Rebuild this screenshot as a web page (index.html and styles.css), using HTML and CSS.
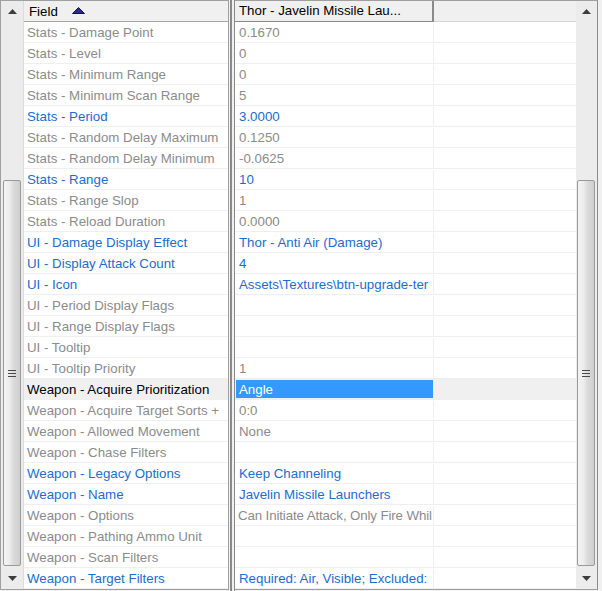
FILE: index.html
```html
<!DOCTYPE html>
<html>
<head>
<meta charset="utf-8">
<link rel="stylesheet" href="styles.css">
</head>
<body>
<div class="window">
  <div class="pane pane-left">
    <div class="vscroll">
      <div class="sbtn"><svg width="9" height="5" viewBox="0 0 9 5"><polygon points="0,5 4.5,0 9,5" fill="#3c3c3c"/></svg></div>
      <div class="track">
        <div class="thumb"><span class="grip"></span></div>
      </div>
      <div class="sbtn"><svg width="9" height="5" viewBox="0 0 9 5"><polygon points="0,0 4.5,5 9,0" fill="#3c3c3c"/></svg></div>
    </div>
    <div class="list">
      <div class="hdr"><div class="hcell hcell-field">Field <svg class="sort" width="13" height="7" viewBox="0 0 13 7"><polygon points="0.5,6.5 6.5,0.5 12.5,6.5" fill="#2e2a8c" stroke="#14124a" stroke-width="1"/></svg></div></div>
      <div class="row g">Stats - Damage Point</div>
      <div class="row g">Stats - Level</div>
      <div class="row g">Stats - Minimum Range</div>
      <div class="row g">Stats - Minimum Scan Range</div>
      <div class="row b">Stats - Period</div>
      <div class="row g">Stats - Random Delay Maximum</div>
      <div class="row g">Stats - Random Delay Minimum</div>
      <div class="row b">Stats - Range</div>
      <div class="row g">Stats - Range Slop</div>
      <div class="row g">Stats - Reload Duration</div>
      <div class="row b">UI - Damage Display Effect</div>
      <div class="row b">UI - Display Attack Count</div>
      <div class="row b">UI - Icon</div>
      <div class="row g">UI - Period Display Flags</div>
      <div class="row g">UI - Range Display Flags</div>
      <div class="row g">UI - Tooltip</div>
      <div class="row g">UI - Tooltip Priority</div>
      <div class="row sel">Weapon - Acquire Prioritization</div>
      <div class="row g">Weapon - Acquire Target Sorts +</div>
      <div class="row g">Weapon - Allowed Movement</div>
      <div class="row g">Weapon - Chase Filters</div>
      <div class="row b">Weapon - Legacy Options</div>
      <div class="row b">Weapon - Name</div>
      <div class="row g">Weapon - Options</div>
      <div class="row g">Weapon - Pathing Ammo Unit</div>
      <div class="row g">Weapon - Scan Filters</div>
      <div class="row b">Weapon - Target Filters</div>
    </div>
  </div>
  <div class="splitter"></div>
  <div class="pane pane-right">
    <div class="list">
      <div class="hdr rhdr"><div class="hcell hcell-val">Thor - Javelin Missile Lau...</div><div class="hcell hcell-empty"></div></div>
      <div class="vrow g"><div class="v">0.1670</div><div class="e"></div></div>
      <div class="vrow g"><div class="v">0</div><div class="e"></div></div>
      <div class="vrow g"><div class="v">0</div><div class="e"></div></div>
      <div class="vrow g"><div class="v">5</div><div class="e"></div></div>
      <div class="vrow b"><div class="v">3.0000</div><div class="e"></div></div>
      <div class="vrow g"><div class="v">0.1250</div><div class="e"></div></div>
      <div class="vrow g"><div class="v">-0.0625</div><div class="e"></div></div>
      <div class="vrow b"><div class="v">10</div><div class="e"></div></div>
      <div class="vrow g"><div class="v">1</div><div class="e"></div></div>
      <div class="vrow g"><div class="v">0.0000</div><div class="e"></div></div>
      <div class="vrow b"><div class="v">Thor - Anti Air (Damage)</div><div class="e"></div></div>
      <div class="vrow b"><div class="v">4</div><div class="e"></div></div>
      <div class="vrow b"><div class="v">Assets\Textures\btn-upgrade-ter</div><div class="e"></div></div>
      <div class="vrow g"><div class="v"></div><div class="e"></div></div>
      <div class="vrow g"><div class="v"></div><div class="e"></div></div>
      <div class="vrow g"><div class="v"></div><div class="e"></div></div>
      <div class="vrow g"><div class="v">1</div><div class="e"></div></div>
      <div class="vrow vsel"><div class="v"><span class="selbox">Angle</span></div><div class="e"></div></div>
      <div class="vrow g"><div class="v">0:0</div><div class="e"></div></div>
      <div class="vrow g"><div class="v">None</div><div class="e"></div></div>
      <div class="vrow g"><div class="v"></div><div class="e"></div></div>
      <div class="vrow b"><div class="v">Keep Channeling</div><div class="e"></div></div>
      <div class="vrow b"><div class="v">Javelin Missile Launchers</div><div class="e"></div></div>
      <div class="vrow g"><div class="v tight">Can Initiate Attack, Only Fire Whil</div><div class="e"></div></div>
      <div class="vrow g"><div class="v"></div><div class="e"></div></div>
      <div class="vrow g"><div class="v"></div><div class="e"></div></div>
      <div class="vrow b"><div class="v">Required: Air, Visible; Excluded:</div><div class="e"></div></div>
    </div>
    <div class="vscroll vscroll-right">
      <div class="sbtn"><svg width="9" height="5" viewBox="0 0 9 5"><polygon points="0,5 4.5,0 9,5" fill="#3c3c3c"/></svg></div>
      <div class="track">
        <div class="thumb"><span class="grip"></span></div>
      </div>
      <div class="sbtn"><svg width="9" height="5" viewBox="0 0 9 5"><polygon points="0,0 4.5,5 9,0" fill="#3c3c3c"/></svg></div>
    </div>
  </div>
</div>
</body>
</html>
```

FILE: styles.css
```css
* { box-sizing: border-box; }
html, body { margin: 0; padding: 0; }
body {
  width: 602px;
  height: 591px;
  background: #f0f0f0;
  font-family: "Liberation Sans", Arial, sans-serif;
  font-size: 13.3px;
  overflow: hidden;
}
.window {
  display: flex;
  width: 602px;
  height: 591px;
  align-items: flex-start;
}
.pane {
  display: flex;
  height: 590px;
  border-top: 1px solid #a0a0a0;
  border-bottom: 1px solid #a0a0a0;
  background: #ffffff;
}
.pane-left {
  width: 229px;
  border-left: 1px solid #a0a0a0;
  border-right: 1px solid #a0a0a0;
}
.pane-right {
  width: 363px;
  border-right: 1px solid #8c8c8c;
}
.splitter {
  width: 6px;
  height: 591px;
  background: linear-gradient(to right,
    #f0f0f0 0, #f0f0f0 1px,
    #8a8a8a 1px, #8a8a8a 3px,
    #f0f0f0 3px, #f0f0f0 5px,
    #8a8a8a 5px, #8a8a8a 6px);
}
.vscroll {
  width: 22px;
  flex: none;
  display: flex;
  flex-direction: column;
  background: #ececec;
}
.vscroll-right { width: 21px; }
.sbtn {
  height: 21px;
  flex: none;
  display: flex;
  align-items: center;
  justify-content: center;
}
.track {
  flex: 1;
  display: flex;
  flex-direction: column;
}
.thumb {
  margin-top: 158px;
  margin-left: 2px;
  width: 18px;
  height: 386px;
  border: 1px solid #9a9a9a;
  border-radius: 2px;
  background: linear-gradient(to right, #f3f3f3 0, #ececec 35%, #dadada 60%, #cfcfcf 100%);
  display: flex;
  align-items: center;
  justify-content: center;
}
.vscroll-right .thumb { margin-left: 1px; }
.grip {
  width: 8px;
  height: 7px;
  background: linear-gradient(to bottom,
    #4a4a4a 0, #4a4a4a 1px, transparent 1px, transparent 3px,
    #4a4a4a 3px, #4a4a4a 4px, transparent 4px, transparent 6px,
    #4a4a4a 6px, #4a4a4a 7px);
}
.list {
  flex: 1;
  display: flex;
  flex-direction: column;
  min-width: 0;
}
.pane-left .list { border-left: 1px solid #dcdcdc; }
.hdr {
  height: 21px;
  flex: none;
  display: flex;
  background: #f0f0f0;
  border-bottom: 1px solid #a8a8a8;
}
.hcell {
  height: 20px;
  line-height: 19px;
  color: #000;
  white-space: nowrap;
  overflow: hidden;
}
.hcell-field {
  flex: 1;
  padding-left: 5px;
  display: flex;
  align-items: center;
  gap: 14px;
}
.sort { display: block; margin-top: -2px; }
.rhdr { border-bottom: none; }
.hcell-val {
  width: 199px;
  flex: none;
  padding-left: 4px;
  border-right: 2px solid #8a8a8a;
  border-bottom: 1px solid #8a8a8a;
  height: 21px;
}
.hcell-empty {
  flex: 1;
  height: 21px;
  border-bottom: 1px solid #d5d5d5;
}
.row, .vrow {
  height: 21px;
  flex: none;
  padding-top: 1px;
  line-height: 20px;
  border-bottom: 1px solid #efefef;
  white-space: nowrap;
  overflow: hidden;
}
.row { padding-left: 3px; }
.g { color: #8b8b8b; }
.b { color: #1a6dcc; }
.row.sel { background: #f0f0f0; color: #000; }
.vrow { display: flex; }
.v {
  width: 199px;
  flex: none;
  padding-left: 4px;
  overflow: hidden;
  border-right: 1px solid #efefef;
  height: 20px;
}
.v.tight { letter-spacing: -0.12px; padding-left: 3px; }
.e { flex: 1; }
.vrow.vsel { background: #f0f0f0; padding-top: 0; }
.vrow.vsel .v { padding: 1px 0 1px 1px; }
.selbox {
  display: block;
  height: 18px;
  line-height: 19px;
  overflow: hidden;
  background: #3399ff;
  color: #ffffff;
  padding-left: 3px;
}
```
